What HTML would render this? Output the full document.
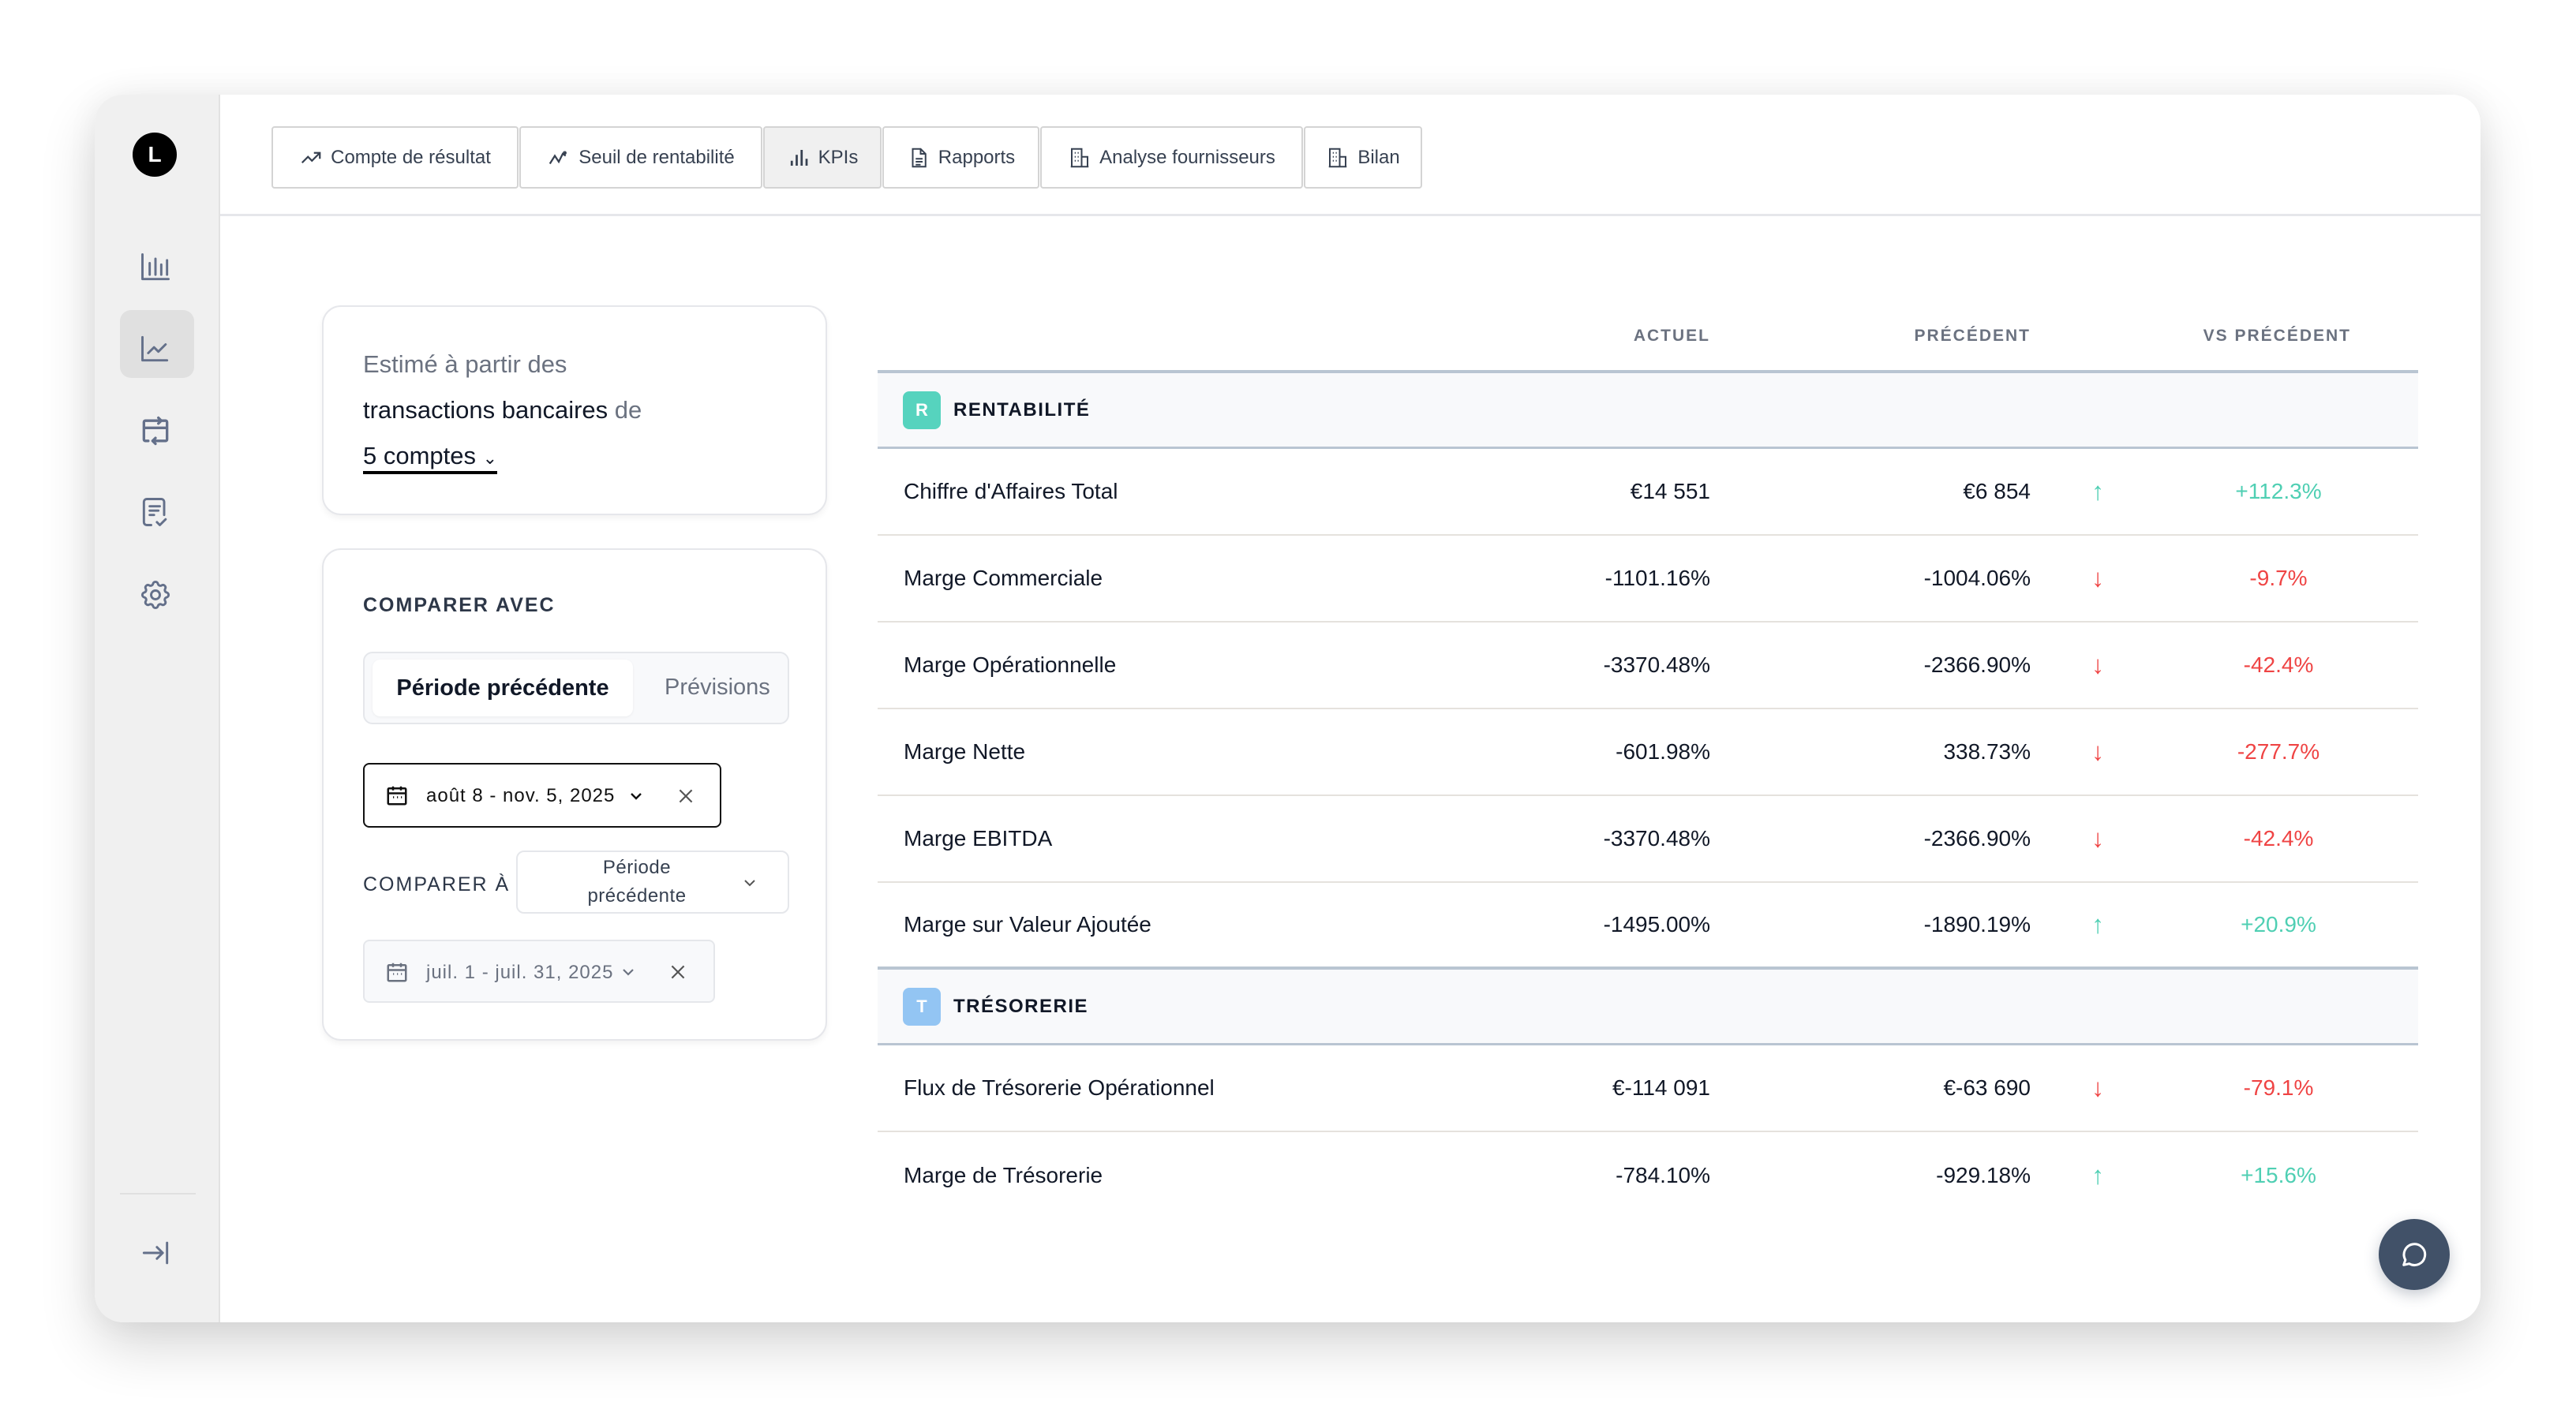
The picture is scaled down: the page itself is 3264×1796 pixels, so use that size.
<!DOCTYPE html>
<html><head><meta charset="utf-8"><style>
*{box-sizing:border-box;margin:0;padding:0}
body{width:3264px;height:1796px;background:#fff;font-family:"Liberation Sans",sans-serif;position:relative;overflow:hidden;color:#111827}
.abs{position:absolute}
.card{left:120px;top:120px;width:3023px;height:1556px;border-radius:36px;background:#fff;box-shadow:0 30px 70px rgba(0,0,0,0.16),0 0 40px rgba(0,0,0,0.05);overflow:hidden}
.side{left:0;top:0;width:159px;height:1556px;background:#f0f0f0;border-right:2px solid #e2e2e2}
.tab{position:absolute;top:40px;height:79px;border:2px solid #d4d4d4;border-radius:4px;display:flex;align-items:center;justify-content:center;gap:10px;font-size:24px;color:#374151;background:#fff}
.tab svg{width:30px;height:30px}
.box{position:absolute;background:#fff;border:2px solid #e6e7eb;border-radius:24px;box-shadow:0 4px 8px rgba(0,0,0,0.05)}
.lbl{font-size:25px;letter-spacing:2px;color:#2d3748;font-weight:600}
.row{position:absolute;left:1112px;width:1952px;height:110px;border-bottom:2px solid #e5e2dd;font-size:28px}
.row span{position:absolute;top:50%;transform:translateY(-50%)}
.n{left:33px}.a{right:897px}.p{right:491px}.ar{left:1538px;font-size:32px}.v{left:1620px;width:310px;text-align:center}
.g{color:#4fcfb3}.r{color:#ef4444}
.sec{position:absolute;left:1112px;width:1952px;height:100px;background:#f8f9fb;border-top:4px solid #b9c5d2;border-bottom:3px solid #b9c5d2}
.bdg{position:absolute;left:32px;top:23px;width:48px;height:48px;border-radius:8px;color:#fff;font-size:22px;display:flex;align-items:center;justify-content:center;font-weight:600}
.st{position:absolute;left:96px;top:33px;font-size:24px;font-weight:700;letter-spacing:1.5px}
.hd{position:absolute;top:414px;font-size:21px;color:#6b7280;letter-spacing:2px;font-weight:600}
</style></head><body>
<div class="abs card">
 <div class="abs side">
  <div class="abs" style="left:48px;top:48px;width:56px;height:56px;border-radius:50%;background:#000;color:#fff;font-weight:700;font-size:28px;display:flex;align-items:center;justify-content:center">L</div>
  <div class="abs" style="left:32px;top:273px;width:94px;height:86px;border-radius:14px;background:#e0e0e0"></div>
  <svg class="abs" style="left:55px;top:197px" width="44" height="44" viewBox="0 0 24 24" fill="none" stroke="#64708a" stroke-width="1.6" stroke-linecap="round" stroke-linejoin="round"><path d="M3 3v17h18M8 9v8M12 6v11M16 10v7M20 7v10"/></svg>
  <svg class="abs" style="left:55px;top:300px" width="44" height="44" viewBox="0 0 24 24" fill="none" stroke="#64708a" stroke-width="1.6" stroke-linecap="round" stroke-linejoin="round"><path d="M3 4v16h17M7 15l4-4 3 3 5-5"/></svg>
  <svg class="abs" style="left:55px;top:404px" width="44" height="44" viewBox="0 0 24 24" fill="none" stroke="#64708a" stroke-width="1.8" stroke-linecap="round" stroke-linejoin="round"><path d="M9 5H5a1 1 0 0 0-1 1v12a1 1 0 0 0 1 1h2M15 5h4a1 1 0 0 1 1 1v12a1 1 0 0 1-1 1h-9M4 10h16M9 5h7M14 3l2 2-2 2M12 17l-2 2 2 2"/></svg>
  <svg class="abs" style="left:55px;top:507px" width="44" height="44" viewBox="0 0 24 24" fill="none" stroke="#64708a" stroke-width="1.6" stroke-linecap="round" stroke-linejoin="round"><path d="M9 21H6a2 2 0 0 1-2-2V5a2 2 0 0 1 2-2h10a2 2 0 0 1 2 2v9M8 8h7M8 11h6M8 14h3M13 19l2 2 4-4"/></svg>
  <svg class="abs" style="left:55px;top:612px" width="44" height="44" viewBox="0 0 24 24" fill="none" stroke="#64708a" stroke-width="1.6" stroke-linecap="round" stroke-linejoin="round"><path d="M10.3 4.3c.4-1.8 3-1.8 3.4 0a1.7 1.7 0 0 0 2.6 1.1c1.5-.9 3.3.8 2.4 2.4a1.7 1.7 0 0 0 1 2.5c1.8.4 1.8 3 0 3.4a1.7 1.7 0 0 0-1 2.600c.9 1.5-.9 3.3-2.4 2.4a1.7 1.7 0 0 0-2.6 1c-.4 1.8-3 1.8-3.4 0a1.7 1.7 0 0 0-2.6-1c-1.5.9-3.3-.9-2.4-2.4a1.7 1.7 0 0 0-1-2.6c-1.8-.4-1.8-3 0-3.4a1.7 1.7 0 0 0 1-2.5c-.9-1.6.9-3.3 2.4-2.4a1.7 1.7 0 0 0 2.6-1.1z"/><circle cx="12" cy="12" r="3"/></svg>
  <div class="abs" style="left:32px;top:1392px;width:96px;height:2px;background:#e0e0e0"></div>
  <svg class="abs" style="left:55px;top:1446px" width="44" height="44" viewBox="0 0 24 24" fill="none" stroke="#64708a" stroke-width="1.6" stroke-linecap="round" stroke-linejoin="round"><path d="M4 12h13M13 8l4 4-4 4M20 5v14"/></svg>
 </div>
 <div class="abs" style="left:159px;top:151px;width:2864px;height:3px;background:#e6e7eb"></div>
 <div class="tab" style="left:224px;width:313px"><svg viewBox="0 0 24 24" fill="none" stroke="#374151" stroke-width="1.8"><path d="M3 17l6-6 4 4 8-8M15 7h6v6"/></svg>Compte de résultat</div>
 <div class="tab" style="left:538px;width:308px"><svg viewBox="0 0 24 24" fill="none" stroke="#374151" stroke-width="1.8"><path d="M3 18l5-8 4 6 4-8 3 2M18 6a1 1 0 1 0 .1 0"/></svg>Seuil de rentabilité</div>
 <div class="tab" style="left:847px;width:150px;background:#f0f0f0;border-color:#d4d4d4"><svg viewBox="0 0 24 24" fill="none" stroke="#374151" stroke-width="2.2"><path d="M5 20v-5M10 20V9M15 20V4M20 20v-7"/></svg>KPIs</div>
 <div class="tab" style="left:998px;width:199px"><svg viewBox="0 0 24 24" fill="none" stroke="#374151" stroke-width="1.6"><path d="M6 3h8l5 5v13H6zM14 3v5h5M9 13h7M9 16h7M9 19h5"/></svg>Rapports</div>
 <div class="tab" style="left:1198px;width:333px"><svg viewBox="0 0 24 24" fill="none" stroke="#374151" stroke-width="1.6"><path d="M4 21V3h10v18zM14 11h6v10h-6M3 21h18M7 7h1M10 7h1M7 11h1M10 11h1M7 15h1M10 15h1"/></svg>Analyse fournisseurs</div>
 <div class="tab" style="left:1532px;width:150px"><svg viewBox="0 0 24 24" fill="none" stroke="#374151" stroke-width="1.6"><path d="M4 21V3h10v18zM14 11h6v10h-6M3 21h18M7 7h1M10 7h1M7 11h1M10 11h1M7 15h1M10 15h1"/></svg>Bilan</div>
</div>

<div class="box" style="left:408px;top:387px;width:640px;height:266px">
 <div class="abs" style="left:50px;top:44px;font-size:31px;line-height:58px;color:#6b7280">Estimé à partir des<br><span style="color:#111827">transactions bancaires</span> de<br><span style="color:#111827;border-bottom:4px solid #000;padding-bottom:2px">5 comptes <span style="font-size:22px">&#8964;</span></span></div>
</div>

<div class="box" style="left:408px;top:695px;width:640px;height:624px">
 <div class="abs lbl" style="left:50px;top:56px">COMPARER AVEC</div>
 <div class="abs" style="left:50px;top:129px;width:540px;height:92px;background:#f8f9fb;border:2px solid #e5e7eb;border-radius:12px">
  <div class="abs" style="left:10px;top:8px;width:330px;height:72px;background:#fff;border-radius:10px;box-shadow:0 1px 3px rgba(0,0,0,0.06);display:flex;align-items:center;justify-content:center;font-size:29px;font-weight:700;color:#111827">Période précédente</div>
  <div class="abs" style="left:380px;top:27px;font-size:29px;color:#6b7280">Prévisions</div>
 </div>
 <div class="abs" style="left:50px;top:270px;width:454px;height:82px;border:2px solid #111;border-radius:8px;font-size:24px;color:#111">
  <svg class="abs" style="left:26px;top:24px" width="30" height="30" viewBox="0 0 24 24" fill="none" stroke="#111" stroke-width="2"><rect x="3" y="5" width="18" height="16" rx="1"/><path d="M3 10h18M8 3v4M16 3v4M8 14h1M12 14h1M16 14h1"/></svg>
  <span class="abs" style="left:78px;top:26px;letter-spacing:1px">août 8 - nov. 5, 2025</span>
  <svg class="abs" style="left:332px;top:28px" width="24" height="24" viewBox="0 0 24 24" fill="none" stroke="#111" stroke-width="2.4"><path d="M6 9l6 6 6-6"/></svg>
  <svg class="abs" style="left:394px;top:27px" width="26" height="26" viewBox="0 0 24 24" fill="none" stroke="#555" stroke-width="2"><path d="M5 5l14 14M19 5L5 19"/></svg>
 </div>
 <div class="abs lbl" style="left:50px;top:410px;font-weight:500">COMPARER À</div>
 <div class="abs" style="left:244px;top:381px;width:346px;height:80px;border:2px solid #e5e7eb;border-radius:10px;font-size:24px;color:#374151;text-align:center;line-height:36px;padding-top:2px;padding-right:40px;letter-spacing:.5px">Période<br>précédente
  <svg class="abs" style="left:282px;top:27px" width="24" height="24" viewBox="0 0 24 24" fill="none" stroke="#555" stroke-width="2"><path d="M6 9l6 6 6-6"/></svg></div>
 <div class="abs" style="left:50px;top:494px;width:446px;height:80px;border:2px solid #e5e7eb;border-radius:8px;background:#f8f9fb;font-size:24px;color:#6b7280">
  <svg class="abs" style="left:26px;top:24px" width="30" height="30" viewBox="0 0 24 24" fill="none" stroke="#6b7280" stroke-width="2"><rect x="3" y="5" width="18" height="16" rx="1"/><path d="M3 10h18M8 3v4M16 3v4M8 14h1M12 14h1M16 14h1"/></svg>
  <span class="abs" style="left:78px;top:26px;letter-spacing:1px">juil. 1 - juil. 31, 2025</span>
  <svg class="abs" style="left:322px;top:27px" width="24" height="24" viewBox="0 0 24 24" fill="none" stroke="#6b7280" stroke-width="2.2"><path d="M6 9l6 6 6-6"/></svg>
  <svg class="abs" style="left:384px;top:26px" width="26" height="26" viewBox="0 0 24 24" fill="none" stroke="#555" stroke-width="2"><path d="M5 5l14 14M19 5L5 19"/></svg>
 </div>
</div>

<div class="hd" style="right:1097px">ACTUEL</div>
<div class="hd" style="right:691px">PRÉCÉDENT</div>
<div class="hd" style="right:285px">VS PRÉCÉDENT</div>

<div class="sec" style="top:469px"><div class="bdg" style="background:#56d3be">R</div><div class="st">RENTABILITÉ</div></div>
<div class="row" style="top:569px"><span class="n">Chiffre d'Affaires Total</span><span class="a">€14 551</span><span class="p">€6 854</span><span class="ar g">↑</span><span class="v g">+112.3%</span></div>
<div class="row" style="top:679px"><span class="n">Marge Commerciale</span><span class="a">-1101.16%</span><span class="p">-1004.06%</span><span class="ar r">↓</span><span class="v r">-9.7%</span></div>
<div class="row" style="top:789px"><span class="n">Marge Opérationnelle</span><span class="a">-3370.48%</span><span class="p">-2366.90%</span><span class="ar r">↓</span><span class="v r">-42.4%</span></div>
<div class="row" style="top:899px"><span class="n">Marge Nette</span><span class="a">-601.98%</span><span class="p">338.73%</span><span class="ar r">↓</span><span class="v r">-277.7%</span></div>
<div class="row" style="top:1009px"><span class="n">Marge EBITDA</span><span class="a">-3370.48%</span><span class="p">-2366.90%</span><span class="ar r">↓</span><span class="v r">-42.4%</span></div>
<div class="row" style="top:1119px;border-bottom:none;height:106px"><span class="n">Marge sur Valeur Ajoutée</span><span class="a">-1495.00%</span><span class="p">-1890.19%</span><span class="ar g">↑</span><span class="v g">+20.9%</span></div>
<div class="sec" style="top:1225px"><div class="bdg" style="background:#93c5f3">T</div><div class="st">TRÉSORERIE</div></div>
<div class="row" style="top:1325px"><span class="n">Flux de Trésorerie Opérationnel</span><span class="a">€-114 091</span><span class="p">€-63 690</span><span class="ar r">↓</span><span class="v r">-79.1%</span></div>
<div class="row" style="top:1435px;border-bottom:none"><span class="n">Marge de Trésorerie</span><span class="a">-784.10%</span><span class="p">-929.18%</span><span class="ar g">↑</span><span class="v g">+15.6%</span></div>

<div class="abs" style="left:3014px;top:1545px;width:90px;height:90px;border-radius:50%;background:#415168;box-shadow:0 6px 18px rgba(65,81,104,0.3)">
 <svg class="abs" style="left:25px;top:25px" width="40" height="40" viewBox="0 0 24 24" fill="none" stroke="#fff" stroke-width="1.8" stroke-linejoin="round"><path d="M4 20l1.3-3.9A8 8 0 1 1 8.2 19z"/></svg>
</div>
</body></html>
